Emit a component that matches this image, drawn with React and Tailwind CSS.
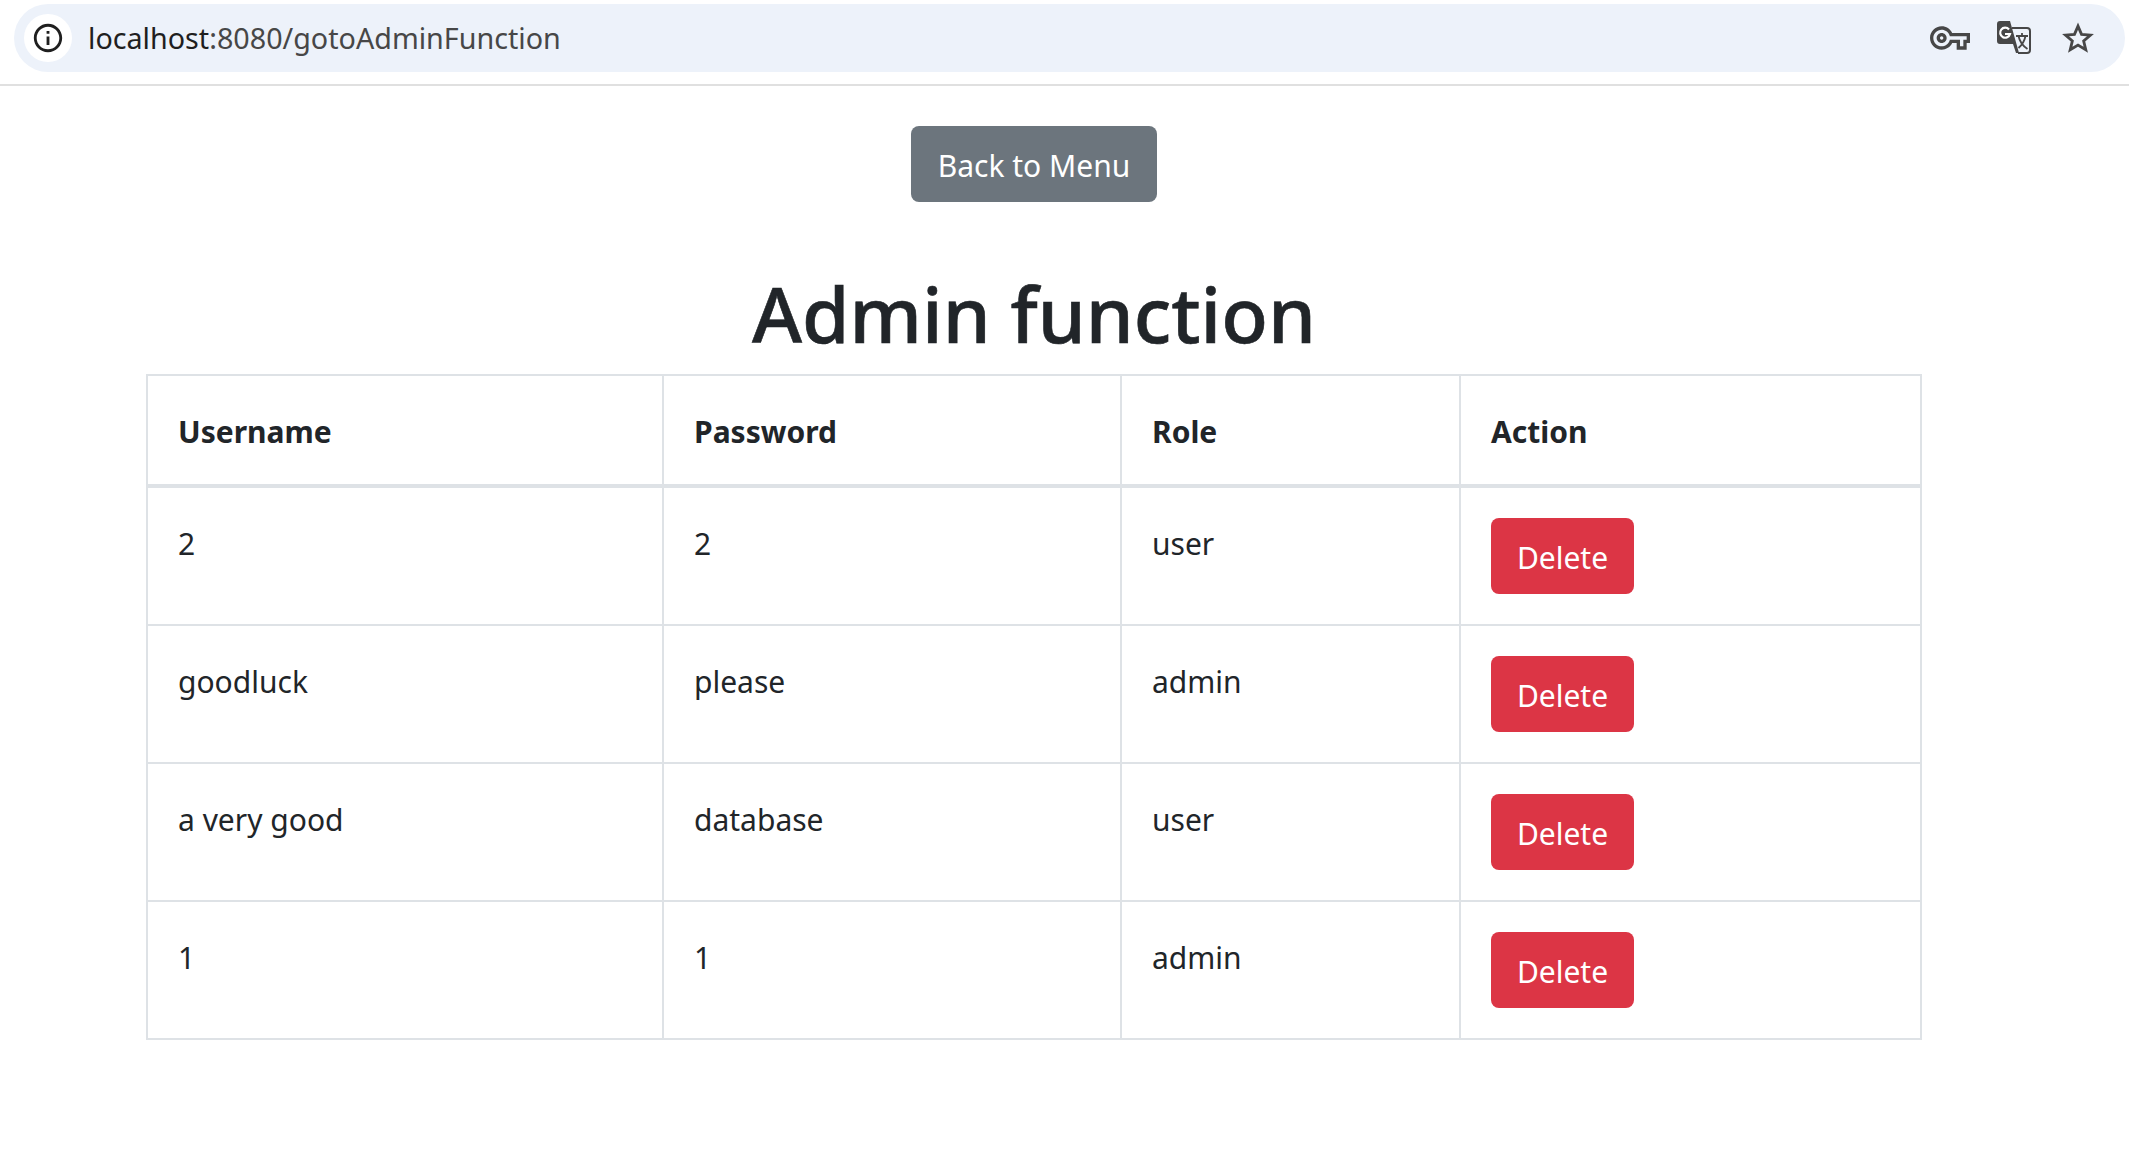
import React from "react";
import { MdOutlineVpnKey, MdInfoOutline } from "react-icons/md";

const rows = [
  ["2", "2", "user"],
  ["goodluck", "please", "admin"],
  ["a very good", "database", "user"],
  ["1", "1", "admin"],
];

function TranslateIcon() {
  return (
    <svg viewBox="0 0 34 34" className="w-[34px] h-[34px]" fill="none">
      <path fill="#474747" d="M3 0H13L22 32H19L16 23H3a3 3 0 0 1-3-3V3a3 3 0 0 1 3-3z" />
      <path stroke="#474747" strokeWidth="2" d="M15 7H30a3 3 0 0 1 3 3V29a3 3 0 0 1-3 3H21" />
      <path stroke="#ffffff" strokeWidth="2.2" d="M12 8.5A5 5 0 1 0 13 13H8" />
      <path stroke="#474747" strokeWidth="1.8" d="M19 15H31M25 12V15M21.5 15C22.5 20 26 25 30.5 28M28.5 15C27.5 20 25 24 21.5 27" />
    </svg>
  );
}

function StarIcon() {
  return (
    <svg viewBox="0 0 24 24" className="w-[34px] h-[34px]" fill="none">
      <path
        stroke="#474747"
        strokeWidth="2"
        strokeLinejoin="miter"
        d="M12 3.6L14.5 9.4L20.8 9.9L16 14.1L17.5 20.3L12 17L6.5 20.3L8 14.1L3.2 9.9L9.5 9.4Z"
      />
    </svg>
  );
}

export default function App() {
  return (
    <div className="min-h-[1171px] bg-white text-[#212529] font-['Noto_Sans',sans-serif]">
      <div className="h-[86px] border-b-2 border-[#e0e0e0] pt-1 pl-[14px] pr-1">
        <div className="h-[68px] rounded-[34px] bg-[#edf2fa] flex items-center pl-[10px] pr-[30px]">
          <div className="w-12 h-12 rounded-full bg-white flex items-center justify-center">
            <MdInfoOutline className="w-[34px] h-[34px] text-[#1f1f1f]" />
          </div>
          <span className="ml-[16px] text-[28.7px] text-[#1f1f1f]">localhost<span className="text-[#474747]">:8080/gotoAdminFunction</span></span>
          <div className="ml-auto flex items-center text-[#474747]">
            <MdOutlineVpnKey className="w-10 h-10" />
            <div className="ml-[27px]"><TranslateIcon /></div>
            <div className="ml-[30px]"><StarIcon /></div>
          </div>
        </div>
      </div>
      <div className="flex flex-col items-center pt-[40px] pl-[146px] pr-[207px]">
        <button className="h-[76px] w-[246px] rounded-lg bg-[#6c757d] text-white text-[30px] pt-0.5">Back to Menu</button>
        <h1 className="mt-[63px] text-[76.5px] leading-[96px] font-medium text-center [-webkit-text-stroke:0.6px_#212529]">Admin function</h1>
        <table className="mt-[13px] w-full table-fixed border-collapse text-[30px]">
          <colgroup>
            <col className="w-[516px]" />
            <col className="w-[458px]" />
            <col className="w-[339px]" />
            <col />
          </colgroup>
          <thead>
            <tr className="h-[111px]">
              {["Username", "Password", "Role", "Action"].map((h) => (
                <th key={h} className="border-2 border-[#dee2e6] border-b-4 pl-[30px] pr-[30px] pt-[3px] text-left font-bold">{h}</th>
              ))}
            </tr>
          </thead>
          <tbody>
            {rows.map((r, i) => (
              <tr key={i}>
                {r.map((c, j) => (
                  <td key={j} className="border-2 border-[#dee2e6] pl-[30px] pr-[30px] pt-[32px] align-top leading-[48px]">{c}</td>
                ))}
                <td className="border-2 border-[#dee2e6] pl-[30px] pr-[30px] pt-[30px] pb-[30px] align-top">
                  <button className="block h-[76px] w-[143px] rounded-lg bg-[#dc3545] text-white text-[30px] pt-0.5">Delete</button>
                </td>
              </tr>
            ))}
          </tbody>
        </table>
      </div>
    </div>
  );
}
